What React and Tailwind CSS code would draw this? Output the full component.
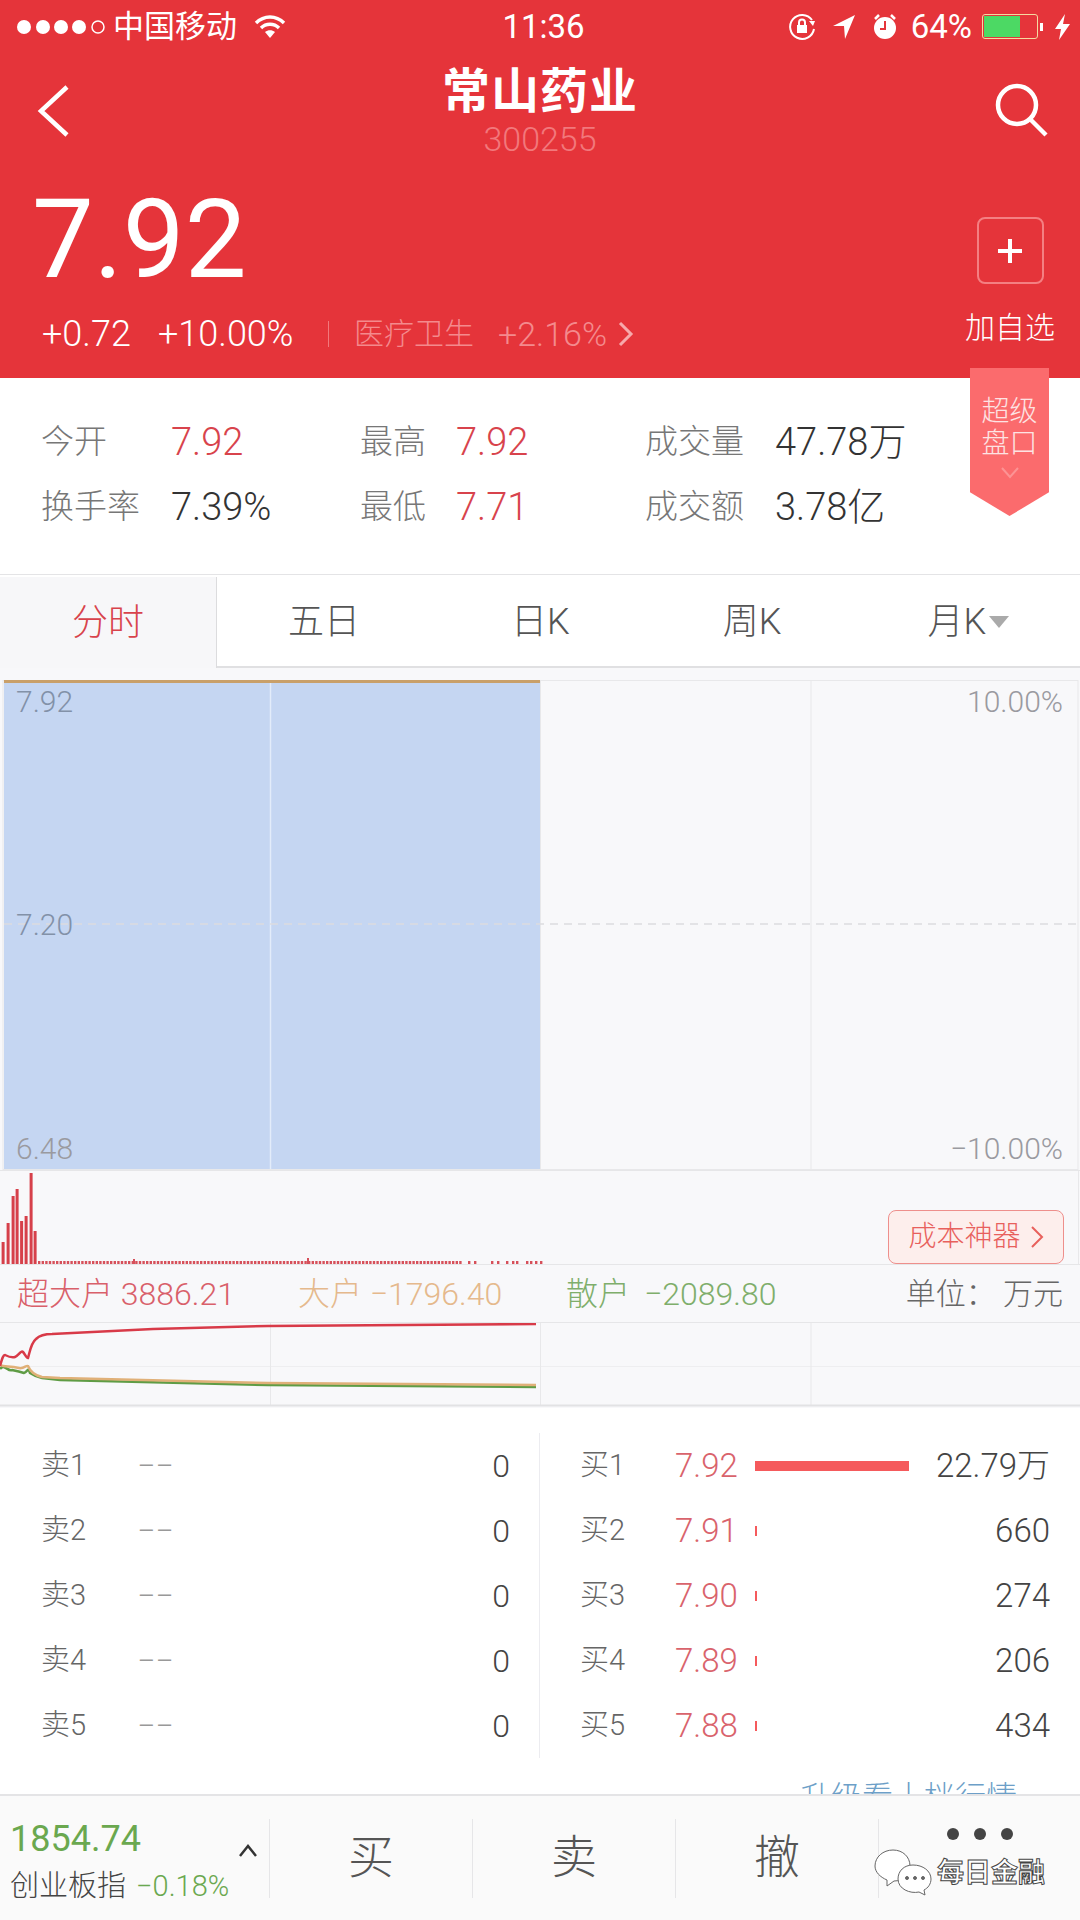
const font = { fontFamily: 'Roboto, "Noto Sans CJK SC", sans-serif' };

const stats = [
  [["今开", "7.92", true], ["最高", "7.92", true], ["成交量", "47.78万", false]],
  [["换手率", "7.39%", false], ["最低", "7.71", true], ["成交额", "3.78亿", false]],
];

const bids = [
  ["买1", "7.92", 154, "22.79万"],
  ["买2", "7.91", 2, "660"],
  ["买3", "7.90", 2, "274"],
  ["买4", "7.89", 2, "206"],
  ["买5", "7.88", 2, "434"],
];

const volumeBars = [
  [3, 22], [8, 41], [13, 68], [17, 75], [21.5, 43], [26, 48], [31, 91], [35, 33],
];

function StatusBar() {
  return (
    <div className="flex h-[53px] items-center justify-between pl-[17px] pr-[10px] font-normal text-white">
      <div className="flex w-[300px] items-center">
        <svg width="92" height="16" viewBox="0 0 92 16">
          <circle cx="7" cy="8" r="7" fill="#fff" />
          <circle cx="26" cy="8" r="7" fill="#fff" />
          <circle cx="44" cy="8" r="7" fill="#fff" />
          <circle cx="62" cy="8" r="7" fill="#fff" />
          <circle cx="81" cy="8" r="6" fill="none" stroke="#fff" strokeWidth="1.5" />
        </svg>
        <span className="ml-[4px] text-[31px] leading-none">中国移动</span>
        <svg className="ml-[17px]" width="32" height="24" viewBox="0 0 32 24" fill="none" stroke="#fff" strokeWidth="3.4">
          <path d="M2 8 C10 0 22 0 30 8" />
          <path d="M7 13 C12 8 20 8 25 13" />
          <path d="M16 23 L11 17 C14 14.5 18 14.5 21 17 Z" fill="#fff" stroke="none" />
        </svg>
      </div>
      <span className="text-[33px] leading-none">11:36</span>
      <div className="flex w-[300px] items-center justify-end">
        <svg width="30" height="30" viewBox="0 0 30 30" fill="none" stroke="#fff" strokeWidth="2">
          <path d="M25 8 A12 12 0 1 0 27 17" />
          <path d="M22 9 L28 9 L26 14" fill="#fff" stroke="none" />
          <rect x="10" y="13" width="10" height="8" fill="#fff" stroke="none" />
          <path d="M12 13 V10.5 a3 3 0 0 1 6 0 V13" />
        </svg>
        <svg className="ml-[16px]" width="22" height="26" viewBox="0 0 22 26">
          <path d="M22 1 L12 25 L11 12 L0 12 Z" fill="#fff" />
        </svg>
        <svg className="ml-[18px]" width="24" height="26" viewBox="0 0 24 26">
          <circle cx="12" cy="14" r="11" fill="#fff" />
          <path d="M12 7 V15 H7" fill="none" stroke="#e5343a" strokeWidth="2" />
          <path d="M2 5 L6 1 M22 5 L18 1" stroke="#fff" strokeWidth="2.5" />
        </svg>
        <span className="ml-[14px] text-[33px] leading-none">64%</span>
        <div className="ml-[10px] h-[25px] w-[56px] rounded-[3px] border border-[#f5d9a0] p-px">
          <div className="h-full w-[36px] bg-[#4cd964]" />
        </div>
        <div className="ml-[2px] h-[8px] w-[3px] bg-white" />
        <svg className="ml-[12px]" width="15" height="26" viewBox="0 0 15 26">
          <path d="M10 0 L0 15 H6 L4 26 L15 10 H8 Z" fill="#fff" />
        </svg>
      </div>
    </div>
  );
}

function Header() {
  return (
    <div className="h-[378px] bg-[#e5343a] text-white">
      <StatusBar />
      <div className="grid grid-cols-[1fr_auto_1fr] items-start pl-[37px] pr-[31px]">
        <svg className="mt-[32px]" width="34" height="52" viewBox="0 0 34 52" fill="none" stroke="#fff" strokeWidth="4.5">
          <path d="M30 2 L4 26 L30 50" />
        </svg>
        <div className="mr-[6px] flex flex-col items-center">
          <div className="mt-[12px] text-[48px] font-bold leading-[54px] tracking-[1px]">常山药业</div>
          <div className="mt-[2px] text-[34px] leading-[36px] text-[#f2787c]">300255</div>
        </div>
        <svg className="mt-[30px] justify-self-end" width="54" height="54" viewBox="0 0 54 54" fill="none" stroke="#fff" strokeWidth="4.5">
          <circle cx="22" cy="22" r="19" />
          <path d="M35 36 L51 52" />
        </svg>
      </div>
      <div className="flex justify-between pl-[32px] pr-[25px]">
        <div>
          <div className="mt-[27px] text-[110px] font-normal leading-[112px]">7.92</div>
          <div className="mt-[18px] flex items-center pl-[10px] text-[36px] leading-[40px]">
            <span className="w-[116px]">+0.72</span>
            <span className="w-[170px]">+10.00%</span>
            <span className="h-[26px] w-px bg-[#f2787c]" />
            <span className="ml-[25px] w-[144px] text-[30px] text-[#f48a8d]">医疗卫生</span>
            <span className="w-[120px] text-[34px] text-[#f48a8d]">+2.16%</span>
            <svg width="16" height="26" viewBox="0 0 16 26" fill="none" stroke="#f7a9ab" strokeWidth="3">
              <path d="M2 2 L13 13 L2 24" />
            </svg>
          </div>
        </div>
        <div className="mt-[60px] flex flex-col items-center">
          <div className="flex h-[67px] w-[67px] items-center justify-center rounded-[8px] border-2 border-[#f47f82]">
            <svg width="24" height="24" viewBox="0 0 24 24" stroke="#fff" strokeWidth="4">
              <path d="M12 0 V24 M0 12 H24" />
            </svg>
          </div>
          <div className="mt-[24px] text-[30px] leading-[40px]">加自选</div>
        </div>
      </div>
    </div>
  );
}

function StatCell({ label, value, red, labelWidth }) {
  return (
    <div className="flex items-center">
      <span className={"text-[33px] leading-[40px] text-[#777] " + labelWidth}>{label}</span>
      <span className={"text-[38px] leading-[40px] " + (red ? "text-[#d8434c]" : "text-[#333]")}>{value}</span>
    </div>
  );
}

function Stats() {
  return (
    <div className="relative h-[196px] bg-white pl-[41px] pt-[44px]">
      <div className="flex flex-col gap-[25px]">
        {stats.map((row, i) => (
          <div key={i} className="grid grid-cols-[319px_285px_1fr]">
            <StatCell label={row[0][0]} value={row[0][1]} red={row[0][2]} labelWidth="w-[130px]" />
            <StatCell label={row[1][0]} value={row[1][1]} red={row[1][2]} labelWidth="w-[96px]" />
            <StatCell label={row[2][0]} value={row[2][1]} red={row[2][2]} labelWidth="w-[130px]" />
          </div>
        ))}
      </div>
      <div className="absolute right-[31px] top-[-10px] flex h-[148px] w-[79px] flex-col items-center bg-[#fb6b6d] pt-[28px] text-[28px] leading-[32px] text-[#fde3e3] [clip-path:polygon(0_0,100%_0,100%_84%,50%_100%,0_84%)]">
        <span>超级</span>
        <span>盘口</span>
        <svg className="mt-[7px]" width="20" height="12" viewBox="0 0 20 12" fill="none" stroke="#fc9394" strokeWidth="2">
          <path d="M2 1 L10 10 L18 1" />
        </svg>
      </div>
    </div>
  );
}

function Tabs() {
  return (
    <div className="flex h-[94px] border-t border-[#e4e4e6] bg-white pt-[2px] text-[36px] text-[#555]">
      <div className="flex w-[217px] items-center justify-center border-r border-[#dcdcde] bg-[#f7f7f9] text-[#d8434c]">分时</div>
      <div className="flex flex-1 items-center border-b-2 border-[#e0e0e2]">
        <span className="ml-[71px]">五日</span>
        <span className="ml-[151px]">日K</span>
        <span className="ml-[153px]">周K</span>
        <span className="ml-[146px]">月K</span>
        <svg className="ml-[3px]" width="20" height="12" viewBox="0 0 20 12">
          <path d="M0 0 H20 L10 12 Z" fill="#aaa" />
        </svg>
      </div>
    </div>
  );
}

function PriceChart() {
  const label = "absolute text-[30px] leading-none text-[#9a9aa0]";
  return (
    <div className="relative h-[490px]">
      <svg className="block" width="1080" height="490" viewBox="0 0 1080 490">
        <rect x="3" y="0.5" width="1075" height="489" fill="none" stroke="#e8e8ea" />
        <rect x="4" y="1" width="536" height="488" fill="#c5d6f2" />
        <rect x="4" y="0" width="536" height="3" fill="#c9a06a" />
        <path d="M270.5 3 V489" stroke="#e3ecfa" strokeWidth="1.5" />
        <path d="M540.5 1 V489 M811 1 V489" stroke="#e8e8ea" />
        <path d="M4 244 H1078" stroke="#dcdce0" strokeWidth="1.5" strokeDasharray="8 6" />
      </svg>
      <span className={label + " left-[16px] top-[7px] text-[#8291a8]"}>7.92</span>
      <span className={label + " left-[16px] top-[230px] text-[#8291a8]"}>7.20</span>
      <span className={label + " bottom-[6px] left-[16px] text-[#7b8ba3]"}>6.48</span>
      <span className={label + " right-[17px] top-[7px]"}>10.00%</span>
      <span className={label + " bottom-[6px] right-[17px]"}>−10.00%</span>
    </div>
  );
}

function VolumeChart() {
  const dots = [];
  for (let x = 38; x < 462; x += 3.6) dots.push(x);
  const sparse = [468, 474, 491, 497, 506, 512, 516, 526, 530, 535, 540];
  return (
    <div className="relative h-[94px] border-t border-[#e6e6e8]">
      <svg className="block" width="1080" height="93" viewBox="0 0 1080 93">
        {volumeBars.map(([x, h]) => (
          <rect key={x} x={x - 1.4} y={93 - h} width="3" height={h} fill="#d6404a" />
        ))}
        {dots.concat(sparse).map((x) => (
          <rect key={x} x={x} y="90" width="2.4" height="3" fill="#d6505a" />
        ))}
        <rect x="133" y="88" width="2" height="5" fill="#d6505a" />
        <rect x="307" y="87" width="2" height="6" fill="#d6505a" />
        <path d="M1078.5 0 V93" stroke="#e8e8ea" />
      </svg>
      <div className="absolute bottom-0 right-[16px] flex h-[54px] w-[176px] items-center justify-center gap-[10px] rounded-[8px] border border-[#ee8f8c] bg-[#fdeeec] text-[28px] text-[#e8605c]">
        <span>成本神器</span>
        <svg width="13" height="24" viewBox="0 0 13 24" fill="none" stroke="#e8605c" strokeWidth="2">
          <path d="M1 2 L11 12 L1 22" />
        </svg>
      </div>
    </div>
  );
}

function MoneyFlow() {
  return (
    <div>
      <div className="flex h-[59px] items-center border-y border-[#e6e6e8] pl-[17px] pr-[17px] text-[32px] leading-none">
        <span className="w-[281px] text-[#d9606a]">超大户 3886.21</span>
        <span className="w-[268px] text-[#e5b98c]">大户 −1796.40</span>
        <span className="text-[#7fae6b]">散户<span className="ml-[14px]">−2089.80</span></span>
        <span className="ml-auto text-[30px] text-[#666]">单位： 万元</span>
      </div>
      <svg className="block" width="1080" height="85" viewBox="0 0 1080 85" fill="none">
        <path d="M0 43.5 H1080" stroke="#eeeef0" />
        <path d="M270.5 0 V82 M540.5 0 V82 M811 0 V82" stroke="#e8e8ea" />
        <path d="M0 46 C4 40 8 49 12 47 C17 48 21 49 24 50 C28 48 28 44 30 50 C33 52 36 54 42 55 L60 57 L268 62 L536 64" stroke="#5f9c45" strokeWidth="2.5" />
        <path d="M0 42 C4 44 8 43 19 45 C24 46 26 42 28 43 C30 48 33 52 42 54 L60 55 L268 60 L536 62" stroke="#e0b078" strokeWidth="2.5" />
        <path d="M0 43 C2 36 3 32 5 32 C9 34 12 35 15 34 C18 33 21 27 23 29 C25 31 26 35 28 35 C30 28 31 20 36 16 C40 12 45 11 52 11 L153 6 L268 3 L536 1" stroke="#d83a48" strokeWidth="2.5" />
        <path d="M0 82.5 H1080" stroke="#e2e2e4" strokeWidth="2" />
      </svg>
    </div>
  );
}

function OrderBook() {
  return (
    <div className="relative h-[386px] overflow-hidden bg-white pt-[25px]">
      <div className="grid grid-cols-[540px_1fr]">
        <div className="border-r border-[#ececf0] pl-[41px] pr-[29px]">
          {[1, 2, 3, 4, 5].map((n) => (
            <div key={n} className="flex h-[65px] items-center text-[32px] leading-none">
              <span className="w-[96px] text-[29px] text-[#666]">{"卖" + n}</span>
              <span className="text-[#999]">−−</span>
              <span className="ml-auto text-[#444]">0</span>
            </div>
          ))}
        </div>
        <div className="pl-[40px] pr-[30px]">
          {bids.map(([name, price, bar, qty]) => (
            <div key={name} className="flex h-[65px] items-center text-[33px] leading-none">
              <span className="w-[95px] text-[29px] text-[#666]">{name}</span>
              <span className="w-[80px] text-[#d9636c]">{price}</span>
              <span className="h-[10px] bg-[#f55a5c]" style={{ width: bar }} />
              <span className="ml-auto text-[#444]">{qty}</span>
            </div>
          ))}
        </div>
      </div>
      <div className="absolute left-0 top-[374px] flex w-full items-center">
        <svg className="ml-[507px]" width="60" height="10" viewBox="0 0 60 10">
          <circle cx="5" cy="5" r="4" fill="#d8d8da" />
          <circle cx="33" cy="5" r="4" fill="#d8d8da" />
          <circle cx="56" cy="5" r="4" fill="#d8d8da" />
        </svg>
        <span className="ml-[233px] text-[31px] leading-none text-[#6d9fc8]">升级看十档行情</span>
      </div>
    </div>
  );
}

function BottomBar() {
  const action = "flex w-[203px] items-center justify-center border-l border-[#e6e6e8] pb-[4px] text-[46px] leading-none text-[#555]";
  return (
    <div className="relative flex h-[127px] border-t-2 border-[#e4e4e6] bg-[#fafafa] py-[23px]">
      <div className="relative w-[269px] pl-[10px]">
        <div className="text-[36px] font-normal leading-[40px] text-[#6aa84f]">1854.74</div>
        <div className="mt-[9px] flex items-center text-[29px] leading-[36px]">
          <span className="text-[#444]">创业板指</span>
          <span className="ml-[10px] text-[#6aa84f]">−0.18%</span>
        </div>
        <svg className="absolute left-[238px] top-[25px]" width="20" height="14" viewBox="0 0 20 14" fill="none" stroke="#333" strokeWidth="2.5">
          <path d="M2 12 L10 2 L18 12" />
        </svg>
      </div>
      <div className={action}>买</div>
      <div className={action}>卖</div>
      <div className={action}>撤</div>
      <div className="flex flex-1 items-start justify-center gap-[15px] border-l border-[#e6e6e8] pt-[9px]">
        <span className="h-[12px] w-[12px] rounded-full bg-[#444]" />
        <span className="h-[12px] w-[12px] rounded-full bg-[#444]" />
        <span className="h-[12px] w-[12px] rounded-full bg-[#444]" />
      </div>
      {/* watermark */}
      <div className="absolute left-[873px] top-[53px] flex items-center">
        <svg width="62" height="48" viewBox="0 0 62 48" fill="#fff" stroke="#666" strokeWidth="1">
          <path d="M20 1 C30 1 37 8 37 17 C37 26 30 32 21 32 L14 37 L14 31 C7 28 2 23 2 17 C2 8 10 1 20 1 Z" />
          <path d="M40 16 C50 16 58 22 58 30 C58 35 55 39 51 41 L52 46 L46 43 C37 45 25 40 25 30 C25 22 31 16 40 16 Z" />
          <circle cx="34" cy="29" r="1.5" fill="#666" />
          <circle cx="42" cy="29" r="1.5" fill="#666" />
          <circle cx="50" cy="29" r="1.5" fill="#666" />
        </svg>
        <span className="ml-[2px] text-[27px] font-bold leading-none text-white [-webkit-text-stroke:1px_#444]">每日金融</span>
      </div>
    </div>
  );
}

export default function App() {
  return (
    <div className="h-[1920px] w-[1080px] overflow-hidden bg-white font-light" style={font}>
      <Header />
      <Stats />
      <Tabs />
      <div className="bg-[#f8f8fa] pt-[12px]">
        <PriceChart />
        <VolumeChart />
        <MoneyFlow />
      </div>
      <OrderBook />
      <BottomBar />
    </div>
  );
}
